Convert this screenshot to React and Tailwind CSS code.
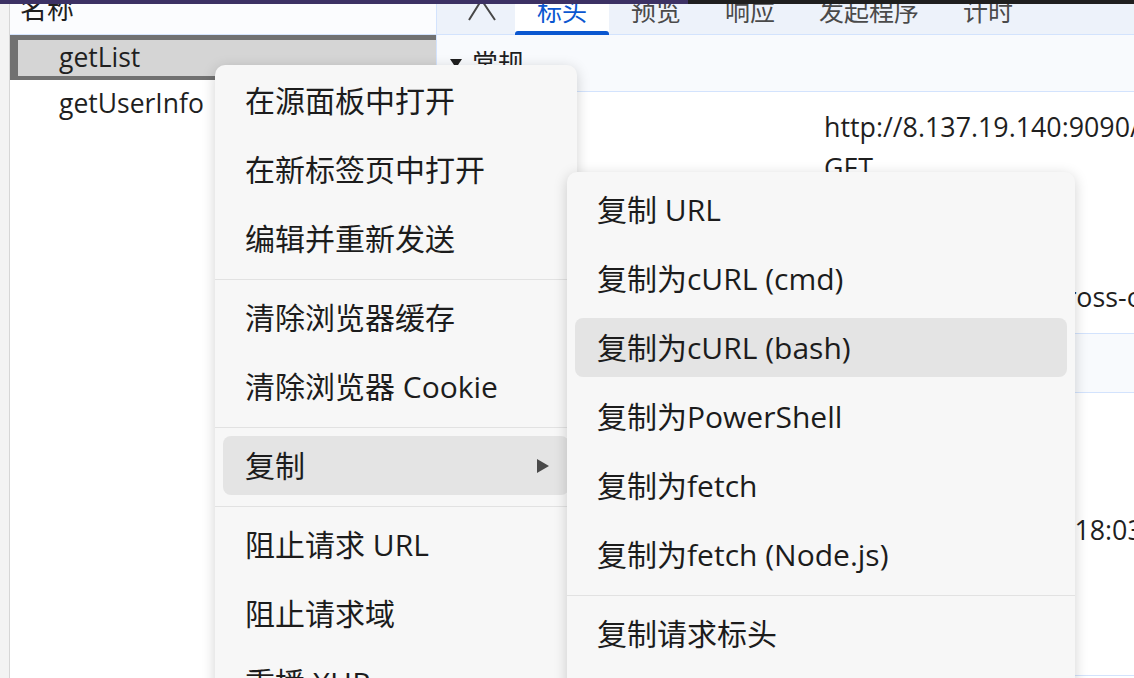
import React from 'react';
import clsx from 'clsx';

const mainMenu = [
  { label: '在源面板中打开' },
  { label: '在新标签页中打开' },
  { label: '编辑并重新发送' },
  'sep',
  { label: '清除浏览器缓存' },
  { label: '清除浏览器 Cookie' },
  'sep',
  { label: '复制', active: true, sub: true },
  'sep',
  { label: '阻止请求 URL' },
  { label: '阻止请求域' },
  { label: '重播 XHR' },
];

const copyMenu = [
  { label: '复制 URL' },
  { label: '复制为cURL (cmd)' },
  { label: '复制为cURL (bash)', active: true },
  { label: '复制为PowerShell' },
  { label: '复制为fetch' },
  { label: '复制为fetch (Node.js)' },
  'sep',
  { label: '复制请求标头' },
  { label: '复制响应标头' },
];

const tabs = ['标头', '预览', '响应', '发起程序', '计时'];

function MenuItem({ label, active, sub }) {
  return (
    <div className="h-[69px] px-2 py-[5px]">
      <div
        className={clsx(
          'h-full flex items-center rounded-lg pl-[22px] pr-5',
          active && 'bg-[#e4e4e4]'
        )}
      >
        <span className="flex-1 whitespace-nowrap">{label}</span>
        {sub && (
          <svg width="12" height="14" viewBox="0 0 12 14">
            <path d="M0 0 L12 7 L0 14 Z" fill="#4a4a4a" />
          </svg>
        )}
      </div>
    </div>
  );
}

function Menu({ items, className }) {
  return (
    <div
      className={clsx(
        'absolute rounded-[10px] bg-[#f7f7f7] shadow-[0_3px_14px_rgba(0,0,0,0.18)] text-[30px] text-[#1c1c1c]',
        className
      )}
    >
      {items.map((it, i) =>
        it === 'sep' ? (
          <div key={i} className="h-[10px] pt-[6px]">
            <div className="h-px bg-[#e2e2e2]" />
          </div>
        ) : (
          <MenuItem key={i} {...it} />
        )
      )}
    </div>
  );
}

function Caret() {
  return (
    <svg width="12" height="9" viewBox="0 0 12 9" className="shrink-0">
      <path d="M0 0 H12 L6 9 Z" fill="#1f1f1f" />
    </svg>
  );
}

export default function App() {
  return (
    <div className="relative w-[1134px] h-[678px] overflow-hidden bg-white flex font-['Open_Sans','Noto_Sans_CJK_SC',sans-serif] text-[#1f1f1f]">
      {/* request list */}
      <div className="w-[437px] shrink-0 flex border-r border-[#d3e3fd]">
        <div className="w-[10px] shrink-0 bg-[#f3f3f3] border-r border-[#d6d6d6]" />
        <div className="flex-1 flex flex-col">
          <div className="h-[35px] shrink-0 bg-[#fbfcfe] border-b border-[#d3e3fd] pl-[10px] text-[27px] leading-[18px]">
            名称
          </div>
          <div className="h-[45px] shrink-0 bg-[#d5d5d5] border-t-[5px] border-b-4 border-l-8 border-[#717171] flex items-center pl-[41px] text-[26.5px]">
            getList
          </div>
          <div className="h-[48px] shrink-0 flex items-center pl-[49px] text-[26.5px]">
            getUserInfo
          </div>
        </div>
      </div>

      {/* details */}
      <div className="flex-1 flex flex-col">
        <div className="h-[35px] shrink-0 flex bg-[#edf2fa] border-b border-[#d3e3fd] text-[25px] leading-[22px]">
          <div className="w-[78px] shrink-0 pl-[31px]">
            <svg width="28" height="21" viewBox="0 0 28 21">
              <path d="M13.5 0 L1 20 M13.5 0 L27 20" stroke="#474747" strokeWidth="2" fill="none" />
            </svg>
          </div>
          {tabs.map((t, i) => (
            <div
              key={t}
              className={clsx(
                'relative px-[22px] whitespace-nowrap',
                i === 0 ? 'bg-white text-[#0b57d0]' : 'text-[#4a4a4a]'
              )}
            >
              {t}
              {i === 0 && (
                <div className="absolute left-0 right-0 -bottom-px h-[4px] rounded-t-[3px] bg-[#0b57d0]" />
              )}
            </div>
          ))}
        </div>

        <div className="h-[57px] shrink-0 bg-[#f8fafd] border-b border-[#d3e3fd] flex items-center gap-[10px] pl-[13px] text-[26px]">
          <Caret />
          常规
        </div>

        <div className="h-[241px] shrink-0 pt-[14px] pl-[387px] text-[26.8px] leading-[41px] whitespace-nowrap overflow-hidden">
          <div>http://8.137.19.140:9090/user/getList</div>
          <div>GET</div>
          <div>200 OK</div>
          <div>8.137.19.140:9090</div>
          <div className="mt-[6px]">strict-origin-when-cross-origin</div>
        </div>

        <div className="h-[60px] shrink-0 bg-[#f8fafd] border-y border-[#d3e3fd] flex items-center gap-[10px] pl-[13px] text-[26px]">
          <Caret />
          响应标头
        </div>

        <div className="h-[283px] shrink-0 border-b border-[#d3e3fd] text-[26.8px] leading-[41px] whitespace-nowrap overflow-hidden pt-[116px] pl-[395px]">
          <div>Thu, 11 Jul 2024 10:18:03 GMT</div>
        </div>
      </div>

      {/* top window strip */}
      <div className="absolute top-0 left-0 w-[688px] h-[4px] bg-[#3c3164]" />
      <div className="absolute top-0 left-[688px] right-0 h-[4px] bg-[#1f1f1f]" />

      {/* context menus */}
      <Menu items={mainMenu} className="left-[215px] top-[65px] w-[362px] pt-px" />
      <Menu items={copyMenu} className="left-[567px] top-[172px] w-[508px] pt-[3px]" />
    </div>
  );
}
